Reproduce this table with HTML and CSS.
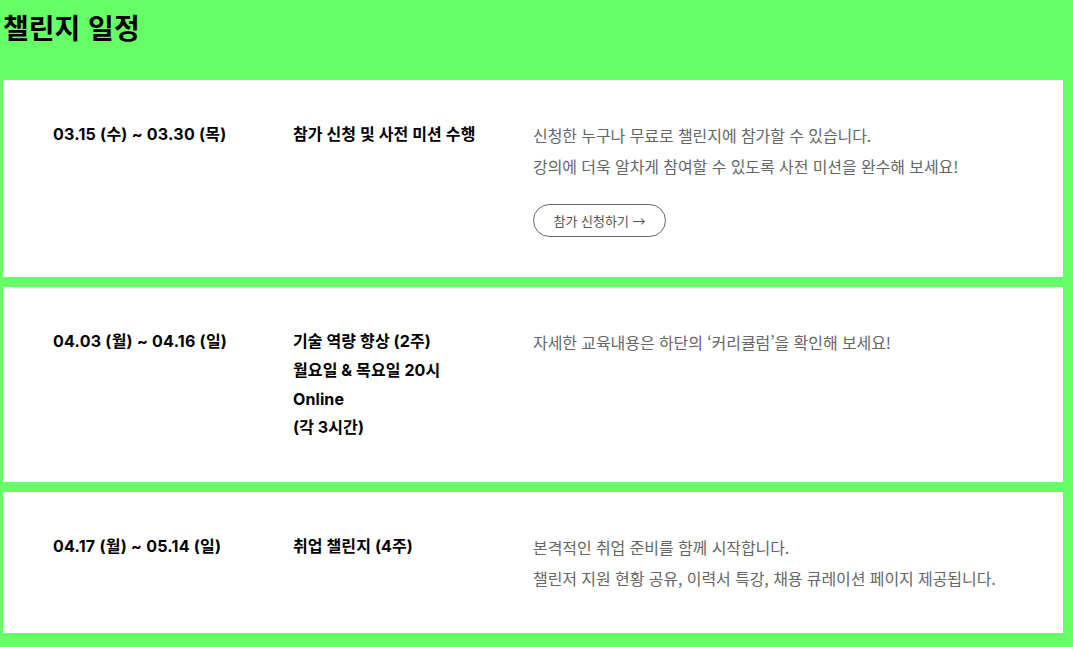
FILE: index.html
```html
<!DOCTYPE html>
<html lang="ko">
<head>
<meta charset="utf-8">
<link rel="stylesheet" href="styles.css">
</head>
<body>
<section class="schedule">
  <h2 class="schedule-title">챌린지 일정</h2>
  <div class="cards">
    <div class="card">
      <div class="col-date">03.15 (수) ~ 03.30 (목)</div>
      <div class="col-title">참가 신청 및 사전 미션 수행</div>
      <div class="col-desc">
        <p>신청한 누구나 무료로 챌린지에 참가할 수 있습니다.</p>
        <p>강의에 더욱 알차게 참여할 수 있도록 사전 미션을 완수해 보세요!</p>
        <a class="apply-btn">참가 신청하기 →</a>
      </div>
    </div>
    <div class="card">
      <div class="col-date">04.03 (월) ~ 04.16 (일)</div>
      <div class="col-title">
        <p>기술 역량 향상 (2주)</p>
        <p>월요일 &amp; 목요일 20시</p>
        <p>Online</p>
        <p>(각 3시간)</p>
      </div>
      <div class="col-desc">
        <p>자세한 교육내용은 하단의 ‘커리큘럼’을 확인해 보세요!</p>
      </div>
    </div>
    <div class="card">
      <div class="col-date">04.17 (월) ~ 05.14 (일)</div>
      <div class="col-title">취업 챌린지 (4주)</div>
      <div class="col-desc">
        <p>본격적인 취업 준비를 함께 시작합니다.</p>
        <p>챌린저 지원 현황 공유, 이력서 특강, 채용 큐레이션 페이지 제공됩니다.</p>
      </div>
    </div>
  </div>
</section>
</body>
</html>
```
FILE: styles.css
```css
html, body {
  margin: 0;
  padding: 0;
  background: #66ff66;
}
body {
  font-family: Inter, "Noto Sans CJK KR", sans-serif;
  color: #000;
}
.schedule {
  padding: 0 10px 14px 3px;
}
.schedule-title {
  margin: 0;
  height: 80px;
  padding-top: 8px;
  box-sizing: border-box;
  font-family: "Noto Sans CJK KR", sans-serif;
  font-size: 28px;
  font-weight: 700;
  line-height: 38px;
}
.cards {
  display: flex;
  flex-direction: column;
  gap: 10px;
}
.card {
  background: #fff;
  display: flex;
  padding: 40px 0 40px 50px;
}
.card p {
  margin: 0;
}
.col-date, .col-title {
  width: 240px;
  flex: none;
  font-size: 16px;
  font-weight: 700;
  line-height: 28.75px;
  letter-spacing: 0.1px;
}
.col-date {
  letter-spacing: 0.25px;
}
.col-desc {
  font-family: "Noto Sans CJK KR", sans-serif;
  font-size: 16px;
  color: #666;
  line-height: 30.5px;
  letter-spacing: -0.08px;
}
.apply-btn {
  display: inline-flex;
  align-items: center;
  justify-content: center;
  margin-top: 23px;
  width: 133px;
  height: 33px;
  box-sizing: border-box;
  border: 1px solid #666;
  border-radius: 17px;
  font-size: 13px;
  color: #555;
  line-height: 1;
  letter-spacing: 0;
}
```
